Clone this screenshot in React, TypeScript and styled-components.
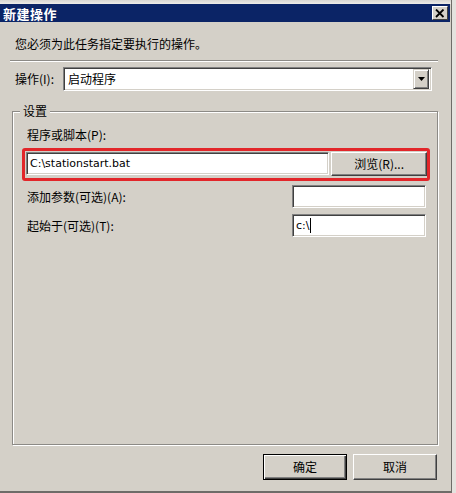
import React from "react";
import styled, { createGlobalStyle } from "styled-components";

const Global = createGlobalStyle`
  html, body { margin: 0; padding: 0; background: #d4d0c8; }
  body {
    width: 456px; height: 493px; overflow: hidden;
    font-family: "Noto Sans CJK SC", "DejaVu Sans", sans-serif;
    font-size: 12px; color: #000;
  }
`;

const Frame = styled.div`
  display: flex;
  width: 456px;
  height: 493px;
  background: #e4e2de;
`;

const Dialog = styled.div`
  width: 451px;
  height: 491px;
  display: flex;
  flex-direction: column;
  background: #d4d0c8;
  border-right: 1px solid #6e6c68;
  border-bottom: 2px solid #6e6c68;
`;

const TopStrip = styled.div`
  height: 4px;
  background: linear-gradient(to bottom, #d8d6d2, #eeece8);
`;

const TitleBar = styled.div`
  height: 18px;
  margin-right: 1px;
  background: #0b2466;
  display: flex;
  align-items: center;
  justify-content: space-between;
  padding: 0 2px 0 3px;
`;

const Title = styled.div`
  color: #fff;
  font-weight: bold;
  font-size: 13px;
  letter-spacing: 0.5px;
`;

const CloseBtn = styled.div`
  width: 16px;
  height: 14px;
  box-sizing: border-box;
  background: #d4d0c8;
  border: 1px solid;
  border-color: #fff #404040 #404040 #fff;
  display: flex;
  align-items: center;
  justify-content: center;
`;

const Content = styled.div`
  flex: 1;
  display: flex;
  flex-direction: column;
  padding: 0 13px 0 12px;
`;

const Intro = styled.div`
  margin-top: 14px;
  padding-left: 3px;
  line-height: 16px;
`;

const Separator = styled.div`
  margin: 8px 0 0 -2px;
  height: 1px;
  background: #8c8a86;
  border-bottom: 1px solid #fff;
`;

const OpRow = styled.div`
  margin-top: 5px;
  display: flex;
  align-items: center;
  padding-left: 3px;
  margin-right: 6px;
  gap: 9px;
`;

const Label = styled.span`
  line-height: 16px;
  white-space: nowrap;
`;

const Select = styled.div`
  flex: 1;
  height: 24px;
  box-sizing: border-box;
  background: #fff;
  border: 1px solid;
  border-color: #808080 #fff #fff #808080;
  box-shadow: inset 1px 1px 0 #404040, inset -1px -1px 0 #d4d0c8;
  display: flex;
  align-items: center;
  padding: 2px 2px 2px 4px;
`;

const SelectText = styled.span`
  flex: 1;
  line-height: 16px;
`;

const DropBtn = styled.div`
  width: 16px;
  height: 20px;
  box-sizing: border-box;
  background: #d4d0c8;
  border: 1px solid;
  border-color: #d4d0c8 #404040 #404040 #d4d0c8;
  box-shadow: inset 1px 1px 0 #fff, inset -1px -1px 0 #808080;
  display: flex;
  align-items: center;
  justify-content: center;
`;

const Group = styled.fieldset`
  margin: 13px 0 0 0;
  padding: 9px 14px 0 14px;
  height: 330px;
  border: 1px solid #8c8a86;
  box-shadow: 1px 1px 0 #fff, inset 1px 1px 0 #fff;
  min-width: 0;
  display: flex;
  flex-direction: column;
`;

const Legend = styled.legend`
  margin-left: -7px;
  padding: 0 3px;
  line-height: 14px;
  background: #d4d0c8;
`;

const Highlight = styled.div`
  margin: 5px 0 0 -5px;
  width: 408px;
  box-sizing: border-box;
  border: 3px solid #e2262a;
  border-radius: 3px;
  padding: 1px 0 2px 1px;
  display: flex;
  gap: 2px;
`;

const Input = styled.div<{ $w?: number }>`
  ${(p) => (p.$w ? `width: ${p.$w}px;` : "flex: 1;")}
  height: 23px;
  box-sizing: border-box;
  background: #fff;
  border: 1px solid;
  border-color: #808080 #fff #fff #808080;
  box-shadow: inset 1px 1px 0 #404040, inset -1px -1px 0 #d4d0c8;
  font-family: "DejaVu Sans", "Liberation Sans", sans-serif;
  font-size: 11px;
  line-height: 19px;
  padding: 1px 3px;
  white-space: nowrap;
  display: flex;
  align-items: center;
`;

const Caret = styled.span`
  display: inline-block;
  width: 1px;
  height: 15px;
  background: #000;
  margin-left: 1px;
`;

const Button = styled.div<{ $default?: boolean; $w: number }>`
  width: ${(p) => p.$w}px;
  height: ${(p) => (p.$default ? 26 : 24)}px;
  box-sizing: border-box;
  background: #d4d0c8;
  border: 1px solid;
  border-color: ${(p) => (p.$default ? "#000" : "#fff #404040 #404040 #fff")};
  box-shadow: ${(p) =>
    p.$default
      ? "inset 1px 1px 0 #fff, inset -1px -1px 0 #404040, inset -2px -2px 0 #808080"
      : "inset -1px -1px 0 #808080"};
  display: flex;
  align-items: center;
  justify-content: center;
  line-height: 16px;
`;

const FieldRow = styled.div<{ $gap: number }>`
  margin-top: ${(p) => p.$gap}px;
  margin-right: -3px;
  display: flex;
  align-items: center;
  justify-content: space-between;
`;

const Footer = styled.div`
  margin-top: 9px;
  display: flex;
  justify-content: flex-end;
  gap: 6px;
  padding-right: 1px;
`;

const FooterButton = styled(Button)`
  height: 26px;
`;

export default function App() {
  return (
    <>
      <Global />
      <Frame>
        <Dialog>
          <TopStrip />
          <TitleBar>
            <Title>新建操作</Title>
            <CloseBtn>
              <svg width="10" height="9" viewBox="0 0 10 9">
                <path d="M1 0.5 L8.5 8 M8.5 0.5 L1 8" stroke="#000" strokeWidth="1.8" />
              </svg>
            </CloseBtn>
          </TitleBar>
          <Content>
            <Intro>您必须为此任务指定要执行的操作。</Intro>
            <Separator />
            <OpRow>
              <Label>操作(I):</Label>
              <Select>
                <SelectText>启动程序</SelectText>
                <DropBtn>
                  <svg width="7" height="4" viewBox="0 0 7 4">
                    <path d="M0 0 H7 L3.5 4 Z" fill="#000" />
                  </svg>
                </DropBtn>
              </Select>
            </OpRow>
            <Group>
              <Legend>设置</Legend>
              <Label>程序或脚本(P):</Label>
              <Highlight>
                <Input $w={304}>C:\stationstart.bat</Input>
                <Button $w={96}>浏览(R)...</Button>
              </Highlight>
              <FieldRow $gap={4}>
                <Label>添加参数(可选)(A):</Label>
                <Input $w={134} />
              </FieldRow>
              <FieldRow $gap={6}>
                <Label>起始于(可选)(T):</Label>
                <Input $w={134}>
                  c:\
                  <Caret />
                </Input>
              </FieldRow>
            </Group>
            <Footer>
              <FooterButton $w={84} $default>
                确定
              </FooterButton>
              <FooterButton $w={84}>取消</FooterButton>
            </Footer>
          </Content>
        </Dialog>
      </Frame>
    </>
  );
}
